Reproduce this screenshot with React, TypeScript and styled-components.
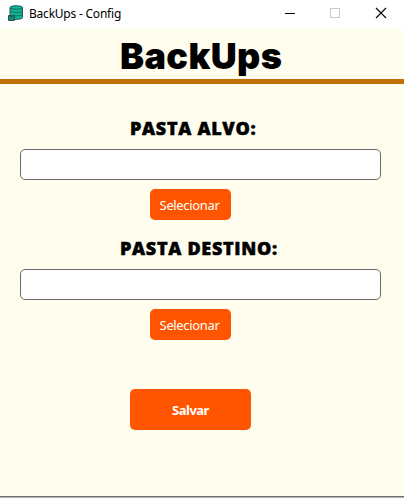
import React from "react";
import styled, { createGlobalStyle } from "styled-components";

const GlobalStyle = createGlobalStyle`
  * { box-sizing: border-box; }
  body { margin: 0; overflow: hidden; }
`;

const Window = styled.div`
  width: 404px;
  height: 498px;
  display: flex;
  flex-direction: column;
  background: #fffdee;
  border-bottom: 1px solid #b5b4ac;
  box-shadow: inset 0 -1px 0 #6f6f6b;
  color: #000;
  font-family: "Noto Sans", sans-serif;
`;

const TitleBar = styled.div`
  height: 29px;
  flex: none;
  display: flex;
  align-items: flex-start;
  background: #fff;
`;

const AppIcon = styled.svg`
  width: 16px;
  height: 16px;
  margin: 5px 5px 0 8px;
`;

const Caption = styled.span`
  flex: 1;
  padding-top: 5px;
  font-size: 12px;
  line-height: 17px;
  letter-spacing: -0.22px;
`;

const Controls = styled.svg`
  width: 134px;
  height: 28px;
`;

const Header = styled.header`
  height: 55px;
  flex: none;
  border-bottom: 5px solid #c07000;
`;

const Heading = styled.h1`
  margin: 0;
  padding-left: 120px;
  font-family: Inter, sans-serif;
  font-weight: 900;
  font-size: 36px;
  line-height: 55px;
  letter-spacing: 0.4px;
  white-space: nowrap;
`;

const Form = styled.main`
  display: flex;
  flex-direction: column;
  padding: 30px 23px 0 20px;
`;

const Field = styled.section`
  height: 120px;
  display: flex;
  flex-direction: column;
`;

const Label = styled.label<{ $indent: number }>`
  height: 35px;
  padding-left: ${(p) => p.$indent}px;
  font-family: "Open Sans", sans-serif;
  font-size: 18px;
  font-weight: 800;
  line-height: 29px;
  letter-spacing: 0.7px;
  -webkit-text-stroke: 0.5px #000;
  white-space: nowrap;
`;

const PathInput = styled.input`
  width: 361px;
  height: 31px;
  padding: 0 8px;
  border: 1px solid #6b6b6b;
  border-radius: 5px;
  background: #fff;
`;

const Button = styled.button<{ $primary?: boolean }>`
  width: ${(p) => (p.$primary ? 121 : 81)}px;
  height: ${(p) => (p.$primary ? 41 : 31)}px;
  margin: ${(p) => (p.$primary ? "35px 0 0 110px" : "9px 0 0 130px")};
  padding: ${(p) => (p.$primary ? "0" : "1px 2px 0 0")};
  border: 0;
  border-radius: 5px;
  background: #ff5500;
  color: #fff;
  font-family: "Noto Sans", sans-serif;
  font-size: 13px;
  font-weight: ${(p) => (p.$primary ? 700 : 400)};
  line-height: 18px;
  letter-spacing: ${(p) => (p.$primary ? -0.5 : -0.35)}px;
`;

const fields = [
  { id: "target", label: "PASTA ALVO:", indent: 110 },
  { id: "destination", label: "PASTA DESTINO:", indent: 100 },
];

export default function App() {
  return (
    <Window>
      <GlobalStyle />
      <TitleBar>
        <AppIcon viewBox="0 0 16 16">
          <path d="M2 2.5C2 .2 14.5.2 14.5 2.5V12.5C14.5 15 2 15 2 12.5Z" fill="#09b894" stroke="#24544c" />
          <path d="M2 2.7C3 4.7 13.5 4.7 14.5 2.7M2 6C3 8 13.5 8 14.5 6M5 10.5C8 11.3 13.5 11 14.5 9.3" fill="none" stroke="#24544c" strokeWidth="0.8" />
          <path d="M.5 10.5H6.5V15.5H.5Z" fill="#168874" stroke="#28554e" />
          <path d="M2 10H5V12H2Z" fill="#28554e" />
        </AppIcon>
        <Caption>BackUps - Config</Caption>
        <Controls viewBox="0 0 134 28" fill="none" shapeRendering="crispEdges">
          <path d="M15 13.5H25" stroke="#000" />
          <rect x="60.5" y="8.5" width="9" height="9" stroke="#c9c9c9" />
          <path d="M106 8L116 18M116 8L106 18" stroke="#000" strokeWidth="1.1" shapeRendering="auto" />
        </Controls>
      </TitleBar>
      <Header>
        <Heading>BackUps</Heading>
      </Header>
      <Form>
        {fields.map((field) => (
          <Field key={field.id}>
            <Label htmlFor={field.id} $indent={field.indent}>{field.label}</Label>
            <PathInput id={field.id} />
            <Button type="button">Selecionar</Button>
          </Field>
        ))}
        <Button type="button" $primary>Salvar</Button>
      </Form>
    </Window>
  );
}
